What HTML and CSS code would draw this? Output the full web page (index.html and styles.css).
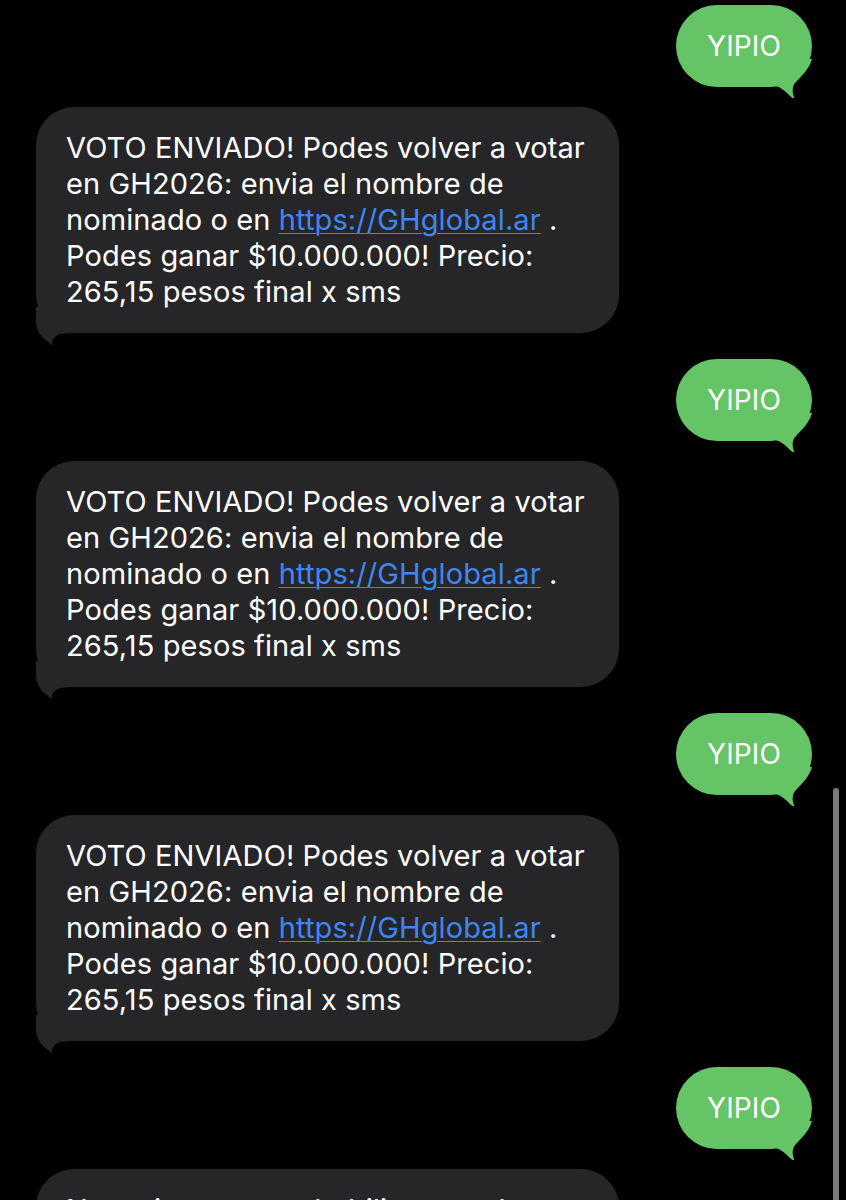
FILE: index.html
```html
<!DOCTYPE html>
<html>

<head>
    <title>Mensajes</title>
    <link rel="stylesheet" href="styles.css">
</head>

<body>
    <div class="thread">
        <div class="row sent">
            <div class="bubble green">YIPIO
                <svg class="tail" width="36" height="40" viewBox="0 0 36 40"><path d="M0,0 L0,27 C6,29 10,33 14,37 C16,39 19,40 18,38 C16,33 16,27 20,23 C27,16 34,8 36,0 Z"/></svg>
            </div>
        </div>
        <div class="row recv">
            <div class="bubble gray">
                VOTO ENVIADO! Podes volver a votar<br>
                en GH2026: envia el nombre de<br>
                nominado o en <a href="#">https://GHglobal.ar</a> .<br>
                Podes ganar $10.000.000! Precio:<br>
                265,15 pesos final x sms
                <svg class="tail" width="36" height="40" viewBox="0 0 36 40"><path d="M0,0 L0,14 C0,24 6,31 12,35 C15,37 17,40 16,38 C15,34 18,29 24,27 L36,26 L36,0 Z"/></svg>
            </div>
        </div>
        <div class="row sent">
            <div class="bubble green">YIPIO
                <svg class="tail" width="36" height="40" viewBox="0 0 36 40"><path d="M0,0 L0,27 C6,29 10,33 14,37 C16,39 19,40 18,38 C16,33 16,27 20,23 C27,16 34,8 36,0 Z"/></svg>
            </div>
        </div>
        <div class="row recv">
            <div class="bubble gray">
                VOTO ENVIADO! Podes volver a votar<br>
                en GH2026: envia el nombre de<br>
                nominado o en <a href="#">https://GHglobal.ar</a> .<br>
                Podes ganar $10.000.000! Precio:<br>
                265,15 pesos final x sms
                <svg class="tail" width="36" height="40" viewBox="0 0 36 40"><path d="M0,0 L0,14 C0,24 6,31 12,35 C15,37 17,40 16,38 C15,34 18,29 24,27 L36,26 L36,0 Z"/></svg>
            </div>
        </div>
        <div class="row sent">
            <div class="bubble green">YIPIO
                <svg class="tail" width="36" height="40" viewBox="0 0 36 40"><path d="M0,0 L0,27 C6,29 10,33 14,37 C16,39 19,40 18,38 C16,33 16,27 20,23 C27,16 34,8 36,0 Z"/></svg>
            </div>
        </div>
        <div class="row recv">
            <div class="bubble gray">
                VOTO ENVIADO! Podes volver a votar<br>
                en GH2026: envia el nombre de<br>
                nominado o en <a href="#">https://GHglobal.ar</a> .<br>
                Podes ganar $10.000.000! Precio:<br>
                265,15 pesos final x sms
                <svg class="tail" width="36" height="40" viewBox="0 0 36 40"><path d="M0,0 L0,14 C0,24 6,31 12,35 C15,37 17,40 16,38 C15,34 18,29 24,27 L36,26 L36,0 Z"/></svg>
            </div>
        </div>
        <div class="row sent">
            <div class="bubble green">YIPIO
                <svg class="tail" width="36" height="40" viewBox="0 0 36 40"><path d="M0,0 L0,27 C6,29 10,33 14,37 C16,39 19,40 18,38 C16,33 16,27 20,23 C27,16 34,8 36,0 Z"/></svg>
            </div>
        </div>
        <div class="row recv">
            <div class="bubble gray">
                Necesitamos que habilites tus datos<br>
                para seguir votando en GH2026
            </div>
        </div>
    </div>
    <!-- indicador de scroll -->
    <div class="scroll-bar"></div>
</body>

</html>
```

FILE: styles.css
```css
/* pantalla de mensajes */
html,
body {
    height: 1200px;
    overflow: hidden;
}

body {
    margin: 0;
    background-color: #000;
    font-family: Inter, "Noto Sans", sans-serif;
    position: relative;
}

.thread {
    display: flex;
    flex-direction: column;
    padding-top: 5px;
}

.row {
    display: flex;
}

.sent {
    justify-content: flex-end;
    padding-right: 34px;
    margin-bottom: 20px;
}

.recv {
    justify-content: flex-start;
    padding-left: 36px;
    margin-bottom: 26px;
}

.bubble {
    position: relative;
    color: #fff;
    font-size: 29px;
    letter-spacing: 0.1px;
}

.green {
    width: 136px;
    height: 82px;
    border-radius: 41px;
    background-color: #65c466;
    display: flex;
    align-items: center;
    justify-content: center;
    box-sizing: border-box;
    font-size: 28px;
}

.gray {
    width: 583px;
    box-sizing: border-box;
    padding: 23px 30px;
    line-height: 36px;
    border-radius: 38px;
    background-color: #262628;
}

.gray a {
    color: #3f86f4;
    text-decoration: underline;
    text-underline-offset: 3px;
    text-decoration-thickness: 1px;
}

/* colita de la burbuja */
.tail {
    position: absolute;
    bottom: -12px;
}

.green .tail {
    right: 0;
    fill: #65c466;
}

.gray .tail {
    left: 0;
    bottom: -14px;
    fill: #262628;
}

.scroll-bar {
    position: absolute;
    right: 7px;
    top: 788px;
    width: 6px;
    height: 420px;
    border-radius: 3px;
    background-color: #7b7b7b;
}
```
